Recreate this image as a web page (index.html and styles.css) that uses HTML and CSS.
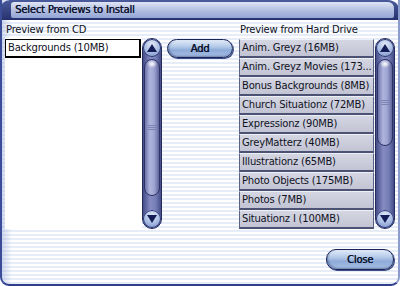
FILE: index.html
```html
<!DOCTYPE html>
<html lang="en">
  <head>
    <meta charset="UTF-8">
    <title>Select Previews to Install</title>
    <link rel="stylesheet" href="styles.css">
  </head>
  <body>
    <div class="window">
      <!-- Title bar -->
      <div class="titlebar">
        <div class="title-strip">Select Previews to Install</div>
      </div>

      <div class="content">
        <div class="panes">
          <!-- CD list -->
          <div class="pane pane-cd">
            <div class="label">Preview from CD</div>
            <div class="listrow">
              <div class="list list-cd">
                <div class="cd-item">Backgrounds (10MB)</div>
              </div>
              <div class="scrollbar">
                <div class="sb-btn">
                  <svg width="10" height="8" viewBox="0 0 10 8"><polygon points="5,0 10,8 0,8" fill="#141c58"/></svg>
                </div>
                <div class="sb-track">
                  <div class="sb-thumb thumb-cd"><span class="grip"></span></div>
                </div>
                <div class="sb-btn">
                  <svg width="10" height="8" viewBox="0 0 10 8"><polygon points="0,0 10,0 5,8" fill="#141c58"/></svg>
                </div>
              </div>
            </div>
          </div>

          <div class="divider"></div>

          <div class="middle">
            <button class="btn btn-add">Add</button>
          </div>

          <!-- Hard drive list -->
          <div class="pane pane-hd">
            <div class="label">Preview from Hard Drive</div>
            <div class="listrow">
              <div class="list list-hd">
                <div class="hd-item">Anim. Greyz (16MB)</div>
                <div class="hd-item">Anim. Greyz Movies (173...</div>
                <div class="hd-item">Bonus Backgrounds (8MB)</div>
                <div class="hd-item">Church Situationz (72MB)</div>
                <div class="hd-item">Expressionz (90MB)</div>
                <div class="hd-item">GreyMatterz (40MB)</div>
                <div class="hd-item">Illustrationz (65MB)</div>
                <div class="hd-item">Photo Objects (175MB)</div>
                <div class="hd-item">Photos (7MB)</div>
                <div class="hd-item">Situationz I (100MB)</div>
              </div>
              <div class="scrollbar">
                <div class="sb-btn">
                  <svg width="10" height="8" viewBox="0 0 10 8"><polygon points="5,0 10,8 0,8" fill="#141c58"/></svg>
                </div>
                <div class="sb-track">
                  <div class="sb-thumb thumb-hd"><span class="grip"></span></div>
                </div>
                <div class="sb-btn">
                  <svg width="10" height="8" viewBox="0 0 10 8"><polygon points="0,0 10,0 5,8" fill="#141c58"/></svg>
                </div>
              </div>
            </div>
          </div>
        </div>

        <div class="footer">
          <button class="btn btn-close">Close</button>
        </div>
      </div>
    </div>
  </body>
</html>
```

FILE: styles.css
```css
body {
  margin: 0;
  padding: 0;
  font-family: 'DejaVu Sans', sans-serif;
  font-size: 10px;
  letter-spacing: -0.2px;
  color: #10121e;
  background: #ffffff;
}
.window {
  width: 400px;
  height: 286px;
  box-sizing: border-box;
  display: flex;
  flex-direction: column;
  border-left: 2px solid #3b4c98;
  border-right: 2px solid #8b9bcc;
  border-bottom: 2px solid #2f3f8c;
  border-radius: 0 0 9px 9px;
  overflow: hidden;
  background:
    linear-gradient(to right, rgba(150, 170, 215, 0.45), rgba(150, 170, 215, 0) 10px),
    repeating-linear-gradient(to bottom, #ffffff 0, #ffffff 2px, #e6edf9 2px, #e6edf9 4px);
}
.titlebar {
  height: 20px;
  box-sizing: border-box;
  margin-left: -2px;
  margin-right: -2px;
  padding: 2px 6px 2px 11px;
  background: linear-gradient(to bottom, #4a5a9c, #26326e);
  border-radius: 10px 12px 0 0;
}
.title-strip {
  height: 16px;
  line-height: 16px;
  padding-left: 4px;
  background: linear-gradient(to bottom, #dfe5f4 0%, #b4c0e2 50%, #94a4d4 100%);
  border-radius: 3px 6px 2px 2px;
  color: #0e1430;
  text-shadow: 0.4px 0 0 #0e1430;
}
.content {
  flex: 1;
  padding: 2px 4px 0 3px;
  display: flex;
  flex-direction: column;
}
.panes {
  display: flex;
}
.pane {
  display: flex;
  flex-direction: column;
}
.label {
  height: 16px;
  line-height: 16px;
  padding-left: 1px;
}
.listrow {
  display: flex;
  height: 191px;
}
.list {
  height: 191px;
  box-sizing: border-box;
  padding-top: 1px;
}
.list-cd {
  width: 137px;
  background: #ffffff;
}
.cd-item {
  height: 19px;
  box-sizing: border-box;
  line-height: 16px;
  padding-left: 2px;
  margin-right: 1px;
  background: #ffffff;
  border: 1px solid #000000;
  border-right-width: 2px;
  border-bottom-width: 2px;
}
.divider {
  width: 1px;
  margin-left: 1px;
  margin-top: 15px;
  height: 191px;
  background: #3c4466;
}
.middle {
  padding-top: 17px;
  margin-left: 4px;
}
.pane-hd {
  margin-left: 6px;
}
.list-hd {
  width: 135px;
}
.hd-item {
  height: 19px;
  box-sizing: border-box;
  line-height: 16px;
  padding-left: 2px;
  background: linear-gradient(to bottom, #d4d6e2, #c2c4d4);
  border-top: 1px solid #eef0f7;
  border-bottom: 2px solid #4c5274;
  border-left: 1px solid #5c6284;
  border-right: 1px solid #5c6284;
  white-space: nowrap;
  overflow: hidden;
}
.scrollbar {
  width: 20px;
  height: 191px;
  box-sizing: border-box;
  display: flex;
  flex-direction: column;
  align-items: center;
  background: linear-gradient(to right, #444c88, #868cc2 40%, #767eb6 70%, #444c88);
  border: 1px solid #262c5e;
  border-radius: 10px;
}
.pane-hd .scrollbar {
  margin-left: 1px;
}
.sb-btn {
  width: 18px;
  height: 18px;
  flex: none;
  display: flex;
  align-items: center;
  justify-content: center;
  border-radius: 50%;
  background: radial-gradient(circle at 50% 30%, #e2eaf8 0%, #a8bce4 50%, #6c82bc 100%);
  box-shadow: inset 0 0 0 1px #2c3670;
}
.sb-track {
  flex: 1;
  align-self: stretch;
  padding: 2px 1px;
  display: flex;
  flex-direction: column;
}
.sb-thumb {
  display: flex;
  align-items: center;
  justify-content: center;
  border-radius: 8px;
  border: 1px solid #2c3264;
  background:
    radial-gradient(ellipse 5px 4px at 50% 4px, #ffffff, rgba(255, 255, 255, 0)),
    linear-gradient(to right, #6c72a8, #aeb4dc 35%, #a0a6d2 65%, #60669c);
}
.thumb-cd {
  height: 135px;
}
.thumb-hd {
  height: 85px;
}
.grip {
  width: 9px;
  height: 6px;
  background: repeating-linear-gradient(to bottom, #7d83b4 0, #7d83b4 1px, rgba(0, 0, 0, 0) 1px, rgba(0, 0, 0, 0) 2px);
}
.btn {
  font-family: 'DejaVu Sans', sans-serif;
  font-size: 10px;
  letter-spacing: -0.2px;
  color: #0c1430;
  text-shadow: 0.4px 0 0 #0c1430;
  border: 1px solid #1a2558;
  border-radius: 10px;
  background: linear-gradient(to bottom, #e2ebf8 0%, #b2c8e8 40%, #8eaad8 60%, #a8c0e6 100%);
  box-shadow: inset 1px -1px 2px rgba(20, 30, 80, 0.4), 1px 1px 0 #3c4c88;
  padding: 0;
  cursor: pointer;
}
.btn-add {
  width: 66px;
  height: 19px;
}
.footer {
  display: flex;
  justify-content: flex-end;
  margin-top: 20px;
}
.btn-close {
  width: 68px;
  height: 21px;
}
```
